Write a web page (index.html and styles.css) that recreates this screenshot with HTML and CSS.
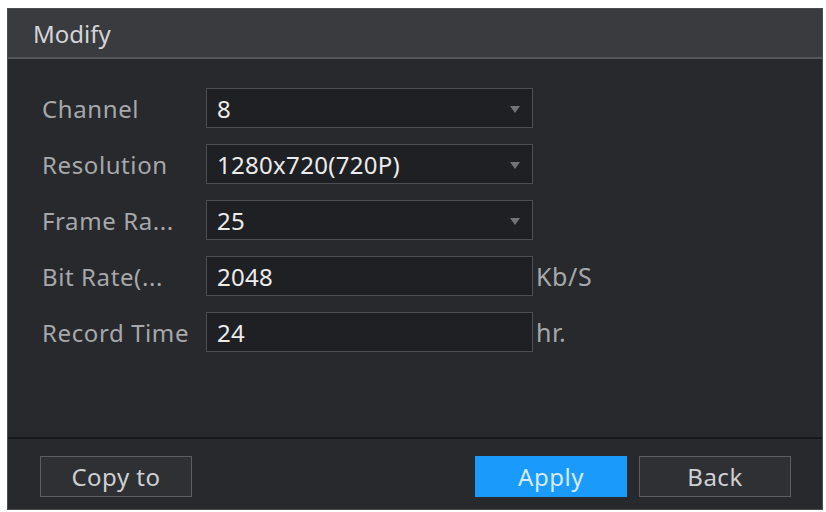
FILE: index.html
```html
<!DOCTYPE html>
<html>
  <head>
    <meta charset="utf-8"/>
    <title>Modify</title>
    <link rel="stylesheet" href="styles.css">
  </head>
  <body>
    <div class="dialog">
      <div class="dialog-header">Modify</div>
      <div class="form">
        <div class="row">
          <span class="label">Channel</span>
          <div class="field select">8<span class="caret"></span></div>
        </div>
        <div class="row">
          <span class="label">Resolution</span>
          <div class="field select">1280x720(720P)<span class="caret"></span></div>
        </div>
        <div class="row">
          <span class="label">Frame Ra...</span>
          <div class="field select">25<span class="caret"></span></div>
        </div>
        <div class="row">
          <span class="label">Bit Rate(...</span>
          <div class="field">2048</div>
          <span class="unit">Kb/S</span>
        </div>
        <div class="row">
          <span class="label">Record Time</span>
          <div class="field">24</div>
          <span class="unit">hr.</span>
        </div>
      </div>
      <div class="footer">
        <button class="btn">Copy to</button>
        <div class="footer-right">
          <button class="btn btn-primary">Apply</button>
          <button class="btn">Back</button>
        </div>
      </div>
    </div>
  </body>
</html>
```

FILE: styles.css
```css
* {
  margin: 0;
  padding: 0;
  box-sizing: border-box;
}

html {
  font-family: 'Noto Sans', 'Open Sans', sans-serif;
}

body {
  background: #fff;
  padding: 8px 3px 2px 7px;
}

.dialog {
  width: 816px;
  height: 502px;
  display: flex;
  flex-direction: column;
  background: #28292d;
  border: 1px solid #4a4c50;
}

.dialog-header {
  height: 50px;
  padding: 0 0 0 25px;
  display: flex;
  align-items: center;
  font-size: 24px;
  color: #d4d5d8;
  background: #3a3b3f;
  border-bottom: 2px solid #55575b;
}

.form {
  flex: 1;
  padding: 29px 0 0 34px;
  display: flex;
  flex-direction: column;
  gap: 16px;
}

.row {
  display: flex;
  align-items: center;
  height: 40px;
}

.label {
  width: 164px;
  font-size: 24px;
  letter-spacing: 0.6px;
  color: #a6a8ab;
  white-space: nowrap;
}

.field {
  width: 327px;
  height: 40px;
  padding: 0 0 0 10px;
  display: flex;
  align-items: center;
  font-size: 24px;
  letter-spacing: 0.3px;
  color: #ececec;
  background: #1f2024;
  border: 1px solid #4b4d51;
}

.select {
  position: relative;
}

.caret {
  position: absolute;
  right: 12px;
  top: 17px;
  border-left: 5px solid transparent;
  border-right: 5px solid transparent;
  border-top: 7px solid #707276;
}

.unit {
  padding: 0 0 0 3px;
  font-size: 25px;
  letter-spacing: 0.6px;
  color: #a6a8ab;
}

.footer {
  height: 72px;
  padding: 17px 31px 0 32px;
  display: flex;
  justify-content: space-between;
  align-items: flex-start;
  border-top: 2px solid #17181b;
}

.footer-right {
  display: flex;
  gap: 12px;
}

.btn {
  width: 152px;
  height: 41px;
  font-family: inherit;
  font-size: 24px;
  letter-spacing: 0.5px;
  color: #cfd0d3;
  background: #2e3034;
  border: 1px solid #5b5d61;
}

.btn-primary {
  color: #d6ebfb;
  background: #1a9bfb;
  border-color: #1a9bfb;
}
```
